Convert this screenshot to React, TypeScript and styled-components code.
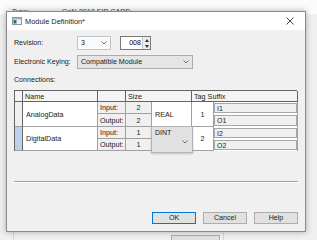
import React from "react";
import styled, { createGlobalStyle } from "styled-components";

const GlobalStyle = createGlobalStyle`
  html, body { margin: 0; padding: 0; }
  body {
    width: 317px; height: 240px; overflow: hidden;
    background: #f0f0f0;
    font-family: "Liberation Sans", Arial, sans-serif;
  }
`;

const Desktop = styled.div`
  position: relative;
  width: 317px;
  height: 240px;
  overflow: hidden;
  background: #f0f0f0;
  display: flex;
  flex-direction: column;
`;

const BackTop = styled.div`
  height: 14px;
  background: #fbfbfb;
  padding: 7px 0 0 12px;
  box-sizing: border-box;
  display: flex;
  gap: 0;
  font-size: 7.2px;
  color: #444;
`;

const BackLabel = styled.span<{ $w: number }>`
  width: ${(p) => p.$w}px;
`;

const BackBody = styled.div`
  flex: 1;
  display: flex;
  padding-left: 13px;
`;

const BackPanel = styled.div`
  width: 211px;
  border-left: 1px solid #d6d6d6;
  border-right: 1px solid #d6d6d6;
  display: flex;
  flex-direction: column;
  justify-content: flex-end;
  align-items: flex-start;
  padding-left: 157px;
  box-sizing: border-box;
`;

const BackButton = styled.div`
  width: 47px;
  height: 8px;
  margin-bottom: -5px;
  background: #e1e1e1;
  border: 1px solid #adadad;
`;

const Dialog = styled.div`
  position: absolute;
  left: 6px;
  top: 11px;
  width: 300px;
  height: 221px;
  box-sizing: border-box;
  border: 1px solid #8a8a8a;
  box-shadow: 0 0 6px rgba(0, 0, 0, 0.3);
  display: flex;
  flex-direction: column;
  background: #f0f0f0;
`;

const TitleBar = styled.div`
  height: 18px;
  background: #ffffff;
  display: flex;
  align-items: center;
  padding: 0 11px 0 5px;
  flex-shrink: 0;
`;

const TitleText = styled.span`
  margin-left: 3px;
  font-size: 7.4px;
  color: #1a1a1a;
  flex: 1;
`;

const Body = styled.div`
  flex: 1;
  display: flex;
  flex-direction: column;
  padding: 6px 7px 7px 7px;
`;

const FieldRow = styled.div<{ $mt?: number }>`
  display: flex;
  align-items: center;
  height: 14px;
  margin-top: ${(p) => p.$mt ?? 0}px;
`;

const Label = styled.span`
  width: 63px;
  font-size: 7.1px;
  color: #1a1a1a;
`;

const Combo = styled.div<{ $w: number; $grey?: boolean }>`
  width: ${(p) => p.$w}px;
  height: 14px;
  box-sizing: border-box;
  border: 1px solid ${(p) => (p.$grey ? "#acacac" : "#c4c4c4")};
  background: ${(p) => (p.$grey ? "#e5e5e5" : "#fafafa")};
  display: flex;
  align-items: center;
  padding: 0 3px 0 3px;
  font-size: 7.1px;
  color: #1a1a1a;
`;

const ComboText = styled.span`
  flex: 1;
`;

const Spin = styled.div`
  margin-left: 9px;
  width: 31px;
  height: 14px;
  box-sizing: border-box;
  border: 1px solid #7a7a7a;
  background: #fff;
  display: flex;
  align-items: stretch;
  font-size: 7.1px;
`;

const SpinText = styled.span`
  flex: 1;
  display: flex;
  align-items: center;
  justify-content: flex-end;
  padding-right: 1px;
`;

const SpinButtons = styled.div`
  width: 7px;
  display: flex;
  flex-direction: column;
  border-left: 1px solid #c8c8c8;
  background: #ececec;
`;

const SpinHalf = styled.div`
  flex: 1;
  display: flex;
  align-items: center;
  justify-content: center;
`;

const Section = styled.div`
  margin-top: 6px;
  height: 10px;
  display: flex;
  align-items: center;
  font-size: 7.1px;
  color: #1a1a1a;
`;

const Grid = styled.div`
  margin-top: 5px;
  width: 283px;
  display: grid;
  grid-template-columns: 8px 75px 28px 26px 40px 22px 84px;
  grid-template-rows: 11px 12px 13px 12px 12px;
  border-left: 1px solid #646464;
  border-top: 1px solid #646464;
  box-sizing: border-box;
  font-size: 7.2px;
  color: #1a1a1a;
  background: #fff;
`;

const Cell = styled.div<{
  $row?: string;
  $col?: string;
  $bg?: string;
  $align?: "left" | "center";
  $valign?: "top" | "center";
  $dark?: boolean;
}>`
  grid-row: ${(p) => p.$row ?? "auto"};
  grid-column: ${(p) => p.$col ?? "auto"};
  background: ${(p) => p.$bg ?? "#fff"};
  border-right: 1px solid ${(p) => (p.$dark ? "#646464" : "#a0a0a0")};
  border-bottom: 1px solid ${(p) => (p.$dark ? "#646464" : "#a0a0a0")};
  box-sizing: border-box;
  display: flex;
  align-items: ${(p) => (p.$valign === "top" ? "flex-start" : "center")};
  justify-content: ${(p) => (p.$align === "center" ? "center" : "flex-start")};
  padding: ${(p) => (p.$align === "center" ? "0" : "0 0 0 2px")};
  white-space: nowrap;
  overflow: hidden;
`;

const Header = styled(Cell).attrs({ $dark: true })`
  background: #f4f4f4;
  padding-left: 2px;
`;

const Selector = styled(Cell)<{ $selected?: boolean }>`
  background: ${(p) => (p.$selected ? "#bfd1ea" : "#f0f0f0")};
  border-right: 1px solid #646464;
`;

const TypeEditor = styled.div`
  grid-row: 4 / span 2;
  grid-column: 5;
  background: #e1e1e1;
  border: 1px solid #b4b4b4;
  margin: -1px -1px -2px -1px;
  box-shadow: 0 1px 2px rgba(0, 0, 0, 0.2);
  position: relative;
  z-index: 1;
  display: flex;
  flex-direction: column;
  padding: 2px 4px 0 3px;
  font-size: 7px;
`;

const EditorChevron = styled.div`
  display: flex;
  justify-content: flex-end;
  margin-top: 4px;
`;

const TagCell = styled.div<{ $row: number }>`
  grid-row: ${(p) => p.$row};
  grid-column: 7;
  border-right: 1px solid #a0a0a0;
  padding: 1px 0 1px 0;
  box-sizing: border-box;
  display: flex;
`;

const TagBox = styled.div`
  flex: 1;
  background: #f0f0f0;
  border: 1px solid #a7a7a7;
  display: flex;
  align-items: center;
  padding-left: 2px;
  font-size: 7px;
`;

const Separator = styled.div`
  margin-top: 30px;
  height: 0;
  border-top: 1px solid #a0a0a0;
  border-bottom: 1px solid #ffffff;
`;

const ButtonRow = styled.div`
  margin-top: auto;
  display: flex;
  justify-content: flex-end;
  gap: 7px;
`;

const Button = styled.div<{ $default?: boolean }>`
  width: 44px;
  height: 12px;
  box-sizing: border-box;
  background: #e1e1e1;
  border: 1px solid ${(p) => (p.$default ? "#0078d7" : "#adadad")};
  display: flex;
  align-items: center;
  justify-content: center;
  font-size: 7.1px;
  color: #1a1a1a;
`;

const Chevron = () => (
  <svg width="6" height="4" viewBox="0 0 6 4">
    <polyline points="0.5,0.5 3,3 5.5,0.5" fill="none" stroke="#606060" strokeWidth="0.9" />
  </svg>
);

const WindowIcon = () => (
  <svg width="10" height="8" viewBox="0 0 10 8">
    <rect x="0.5" y="0.5" width="9" height="7" fill="#eef2f5" stroke="#8a96a0" />
    <rect x="1" y="1" width="8" height="1.5" fill="#9fb7c9" />
    <rect x="1.5" y="3" width="3" height="3.5" fill="#2f6e6a" />
  </svg>
);

const CloseIcon = () => (
  <svg width="8" height="8" viewBox="0 0 8 8">
    <path d="M0.5 0.5 L7.5 7.5 M7.5 0.5 L0.5 7.5" stroke="#333" strokeWidth="0.9" />
  </svg>
);

const Tri = ({ up }: { up?: boolean }) => (
  <svg width="4" height="3" viewBox="0 0 4 3">
    <polygon points={up ? "0,3 2,0 4,3" : "0,0 4,0 2,3"} fill="#333" />
  </svg>
);

export default function App() {
  return (
    <>
      <GlobalStyle />
      <Desktop>
        <BackTop>
          <BackLabel $w={50}>Type:</BackLabel>
          <span>CoN-2018 EIP CARD</span>
        </BackTop>
        <BackBody>
          <BackPanel>
            <BackButton />
          </BackPanel>
        </BackBody>

        <Dialog>
          <TitleBar>
            <WindowIcon />
            <TitleText>Module Definition*</TitleText>
            <CloseIcon />
          </TitleBar>
          <Body>
            <FieldRow>
              <Label>Revision:</Label>
              <Combo $w={34}>
                <ComboText>3</ComboText>
                <Chevron />
              </Combo>
              <Spin>
                <SpinText>008</SpinText>
                <SpinButtons>
                  <SpinHalf>
                    <Tri up />
                  </SpinHalf>
                  <SpinHalf>
                    <Tri />
                  </SpinHalf>
                </SpinButtons>
              </Spin>
            </FieldRow>
            <FieldRow $mt={5}>
              <Label>Electronic Keying:</Label>
              <Combo $w={116} $grey>
                <ComboText>Compatible Module</ComboText>
                <Chevron />
              </Combo>
            </FieldRow>
            <Section>Connections:</Section>
            <Grid>
              <Header $col="1" />
              <Header $col="2">Name</Header>
              <Header $col="3" />
              <Header $col="4 / span 2">Size</Header>
              <Header $col="6 / span 2">Tag Suffix</Header>

              <Selector $row="2 / span 2" $col="1" />
              <Cell $row="2 / span 2" $col="2" style={{ paddingLeft: 3 }}>
                AnalogData
              </Cell>
              <Cell $row="2" $col="3" $bg="#f0f0f0">Input:</Cell>
              <Cell $row="2" $col="4" $bg="#f0f0f0" $align="center">2</Cell>
              <Cell $row="3" $col="3" $bg="#f0f0f0">Output:</Cell>
              <Cell $row="3" $col="4" $bg="#f0f0f0" $align="center">2</Cell>
              <Cell $row="2 / span 2" $col="5" style={{ paddingLeft: 3 }}>
                REAL
              </Cell>
              <Cell $row="2 / span 2" $col="6" $align="center">1</Cell>
              <TagCell $row={2}>
                <TagBox>I1</TagBox>
              </TagCell>
              <TagCell $row={3}>
                <TagBox>O1</TagBox>
              </TagCell>

              <Selector $row="4 / span 2" $col="1" $selected />
              <Cell $row="4 / span 2" $col="2" style={{ paddingLeft: 3 }}>
                DigitalData
              </Cell>
              <Cell $row="4" $col="3" $bg="#f0f0f0">Input:</Cell>
              <Cell $row="4" $col="4" $bg="#f0f0f0" $align="center">1</Cell>
              <Cell $row="5" $col="3" $bg="#f0f0f0">Output:</Cell>
              <Cell $row="5" $col="4" $bg="#f0f0f0" $align="center">1</Cell>
              <TypeEditor>
                <span>DINT</span>
                <EditorChevron>
                  <Chevron />
                </EditorChevron>
              </TypeEditor>
              <Cell $row="4 / span 2" $col="6" $align="center">2</Cell>
              <TagCell $row={4}>
                <TagBox>I2</TagBox>
              </TagCell>
              <TagCell $row={5}>
                <TagBox>O2</TagBox>
              </TagCell>
            </Grid>
            <Separator />
            <ButtonRow>
              <Button $default>OK</Button>
              <Button>Cancel</Button>
              <Button>Help</Button>
            </ButtonRow>
          </Body>
        </Dialog>
      </Desktop>
    </>
  );
}
